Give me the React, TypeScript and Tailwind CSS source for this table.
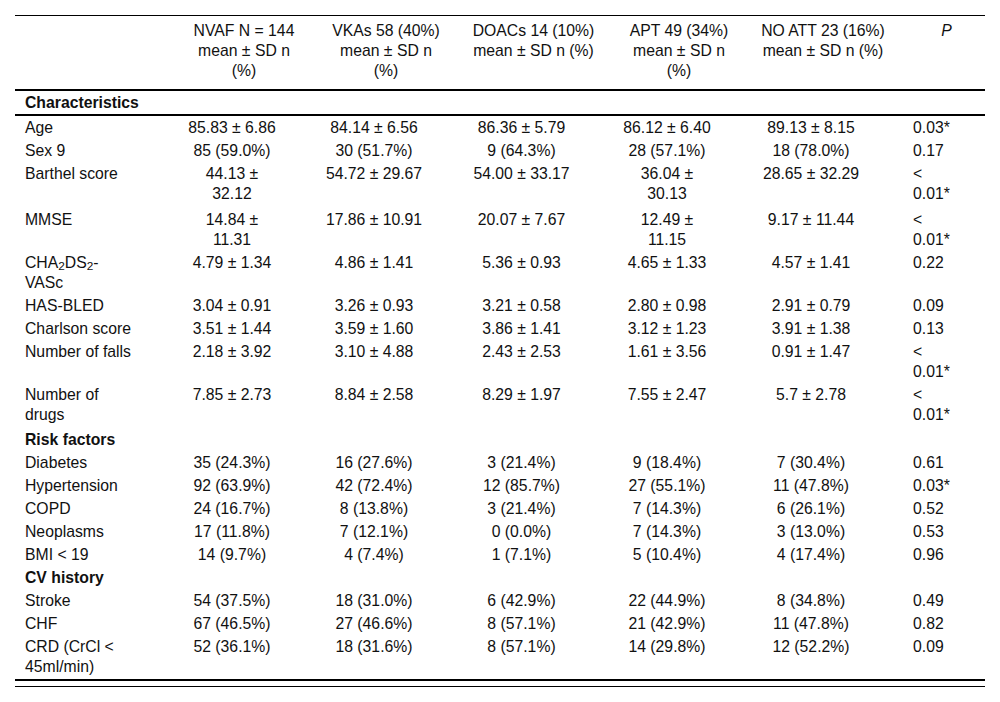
import React from "react";

type Row =
  | { kind: "section"; label: string; line?: boolean }
  | {
      kind: "data";
      label: React.ReactNode;
      cells: React.ReactNode[];
      p: React.ReactNode;
      pb?: string;
      last?: boolean;
    };

const br = (a: string, b: string) => (
  <>
    {a}
    <br />
    {b}
  </>
);

const lt = br("<", "0.01*");

const rows: Row[] = [
  { kind: "section", label: "Characteristics", line: true },
  { kind: "data", label: "Age", cells: ["85.83 ± 6.86", "84.14 ± 6.56", "86.36 ± 5.79", "86.12 ± 6.40", "89.13 ± 8.15"], p: "0.03*" },
  { kind: "data", label: "Sex 9", cells: ["85 (59.0%)", "30 (51.7%)", "9 (64.3%)", "28 (57.1%)", "18 (78.0%)"], p: "0.17" },
  {
    kind: "data",
    label: "Barthel score",
    cells: [br("44.13 ±", "32.12"), "54.72 ± 29.67", "54.00 ± 33.17", br("36.04 ±", "30.13"), "28.65 ± 32.29"],
    p: lt,
    pb: "pb-[4.5px]",
  },
  { kind: "data", label: "MMSE", cells: [br("14.84 ±", "11.31"), "17.86 ± 10.91", "20.07 ± 7.67", br("12.49 ±", "11.15"), "9.17 ± 11.44"], p: lt },
  {
    kind: "data",
    label: (
      <>
        CHA<sub>2</sub>DS<sub>2</sub>-
        <br />
        VASc
      </>
    ),
    cells: ["4.79 ± 1.34", "4.86 ± 1.41", "5.36 ± 0.93", "4.65 ± 1.33", "4.57 ± 1.41"],
    p: "0.22",
  },
  { kind: "data", label: "HAS-BLED", cells: ["3.04 ± 0.91", "3.26 ± 0.93", "3.21 ± 0.58", "2.80 ± 0.98", "2.91 ± 0.79"], p: "0.09" },
  { kind: "data", label: "Charlson score", cells: ["3.51 ± 1.44", "3.59 ± 1.60", "3.86 ± 1.41", "3.12 ± 1.23", "3.91 ± 1.38"], p: "0.13" },
  { kind: "data", label: "Number of falls", cells: ["2.18 ± 3.92", "3.10 ± 4.88", "2.43 ± 2.53", "1.61 ± 3.56", "0.91 ± 1.47"], p: lt },
  {
    kind: "data",
    label: br("Number of", "drugs"),
    cells: ["7.85 ± 2.73", "8.84 ± 2.58", "8.29 ± 1.97", "7.55 ± 2.47", "5.7 ± 2.78"],
    p: lt,
    pb: "pb-[3.5px]",
  },
  { kind: "section", label: "Risk factors" },
  { kind: "data", label: "Diabetes", cells: ["35 (24.3%)", "16 (27.6%)", "3 (21.4%)", "9 (18.4%)", "7 (30.4%)"], p: "0.61" },
  { kind: "data", label: "Hypertension", cells: ["92 (63.9%)", "42 (72.4%)", "12 (85.7%)", "27 (55.1%)", "11 (47.8%)"], p: "0.03*" },
  { kind: "data", label: "COPD", cells: ["24 (16.7%)", "8 (13.8%)", "3 (21.4%)", "7 (14.3%)", "6 (26.1%)"], p: "0.52" },
  { kind: "data", label: "Neoplasms", cells: ["17 (11.8%)", "7 (12.1%)", "0 (0.0%)", "7 (14.3%)", "3 (13.0%)"], p: "0.53" },
  { kind: "data", label: "BMI < 19", cells: ["14 (9.7%)", "4 (7.4%)", "1 (7.1%)", "5 (10.4%)", "4 (17.4%)"], p: "0.96" },
  { kind: "section", label: "CV history" },
  { kind: "data", label: "Stroke", cells: ["54 (37.5%)", "18 (31.0%)", "6 (42.9%)", "22 (44.9%)", "8 (34.8%)"], p: "0.49" },
  { kind: "data", label: "CHF", cells: ["67 (46.5%)", "27 (46.6%)", "8 (57.1%)", "21 (42.9%)", "11 (47.8%)"], p: "0.82" },
  {
    kind: "data",
    label: br("CRD (CrCl <", "45ml/min)"),
    cells: ["52 (36.1%)", "18 (31.6%)", "8 (57.1%)", "14 (29.8%)", "12 (52.2%)"],
    p: "0.09",
    pb: "pb-[2px]",
    last: true,
  },
];

const headers: React.ReactNode[] = [
  <>
    NVAF N = 144
    <br />
    mean ± SD n
    <br />
    (%)
  </>,
  <>
    VKAs 58 (40%)
    <br />
    mean ± SD n
    <br />
    (%)
  </>,
  <>
    DOACs 14 (10%)
    <br />
    mean ± SD n (%)
  </>,
  <>
    APT 49 (34%)
    <br />
    mean ± SD n
    <br />
    (%)
  </>,
  <>
    NO ATT 23 (16%)
    <br />
    mean ± SD n (%)
  </>,
];

export default function App() {
  return (
    <div
      className="w-[1000px] h-[702px] bg-white pt-[15px] pl-[15px] text-[#111] text-[15.75px] leading-[20px]"
      style={{ fontFamily: '"Liberation Sans", Arial, sans-serif' }}
    >
      <table className="table-fixed border-separate border-spacing-0 w-[970px]">
        <colgroup>
          <col className="w-[158px]" />
          <col className="w-[142px]" />
          <col className="w-[142px]" />
          <col className="w-[153px]" />
          <col className="w-[138px]" />
          <col className="w-[150px]" />
          <col className="w-[87px]" />
        </colgroup>
        <thead>
          <tr>
            <th className="border-t border-b-2 border-black pt-[5px] pb-[8px] pl-[10px]" />
            {headers.map((h, i) => (
              <th
                key={i}
                className="border-t border-b-2 border-black pt-[5px] pb-[8px] px-[10px] text-center font-normal align-top whitespace-nowrap"
              >
                {h}
              </th>
            ))}
            <th className="border-t border-b-2 border-black pt-[5px] pb-[8px] pl-[15px] pr-[5px] text-center font-normal italic align-top">
              P
            </th>
          </tr>
        </thead>
        <tbody>
          {rows.map((r, i) => {
            if (r.kind === "section") {
              return (
                <tr key={i}>
                  <td
                    colSpan={7}
                    className={`pl-[10px] py-[1.5px] font-bold ${r.line ? "border-b-2 border-black" : ""}`}
                  >
                    {r.label}
                  </td>
                </tr>
              );
            }
            const pb = r.pb ?? "pb-[1.5px]";
            const bottom = r.last ? "border-b-2 border-black" : "";
            return (
              <tr key={i}>
                <td className={`pl-[10px] pr-[10px] pt-[1.5px] align-top whitespace-nowrap ${pb} ${bottom}`}>
                  {r.label}
                </td>
                {r.cells.map((c, j) => (
                  <td
                    key={j}
                    className={`pl-[10px] pr-[34px] pt-[1.5px] text-center align-top whitespace-nowrap ${pb} ${bottom}`}
                  >
                    {c}
                  </td>
                ))}
                <td className={`pl-[15px] pt-[1.5px] text-left align-top whitespace-nowrap ${pb} ${bottom}`}>
                  {r.p}
                </td>
              </tr>
            );
          })}
        </tbody>
      </table>
      <div className="w-[970px] mt-[5px] border-t border-black" />
    </div>
  );
}
